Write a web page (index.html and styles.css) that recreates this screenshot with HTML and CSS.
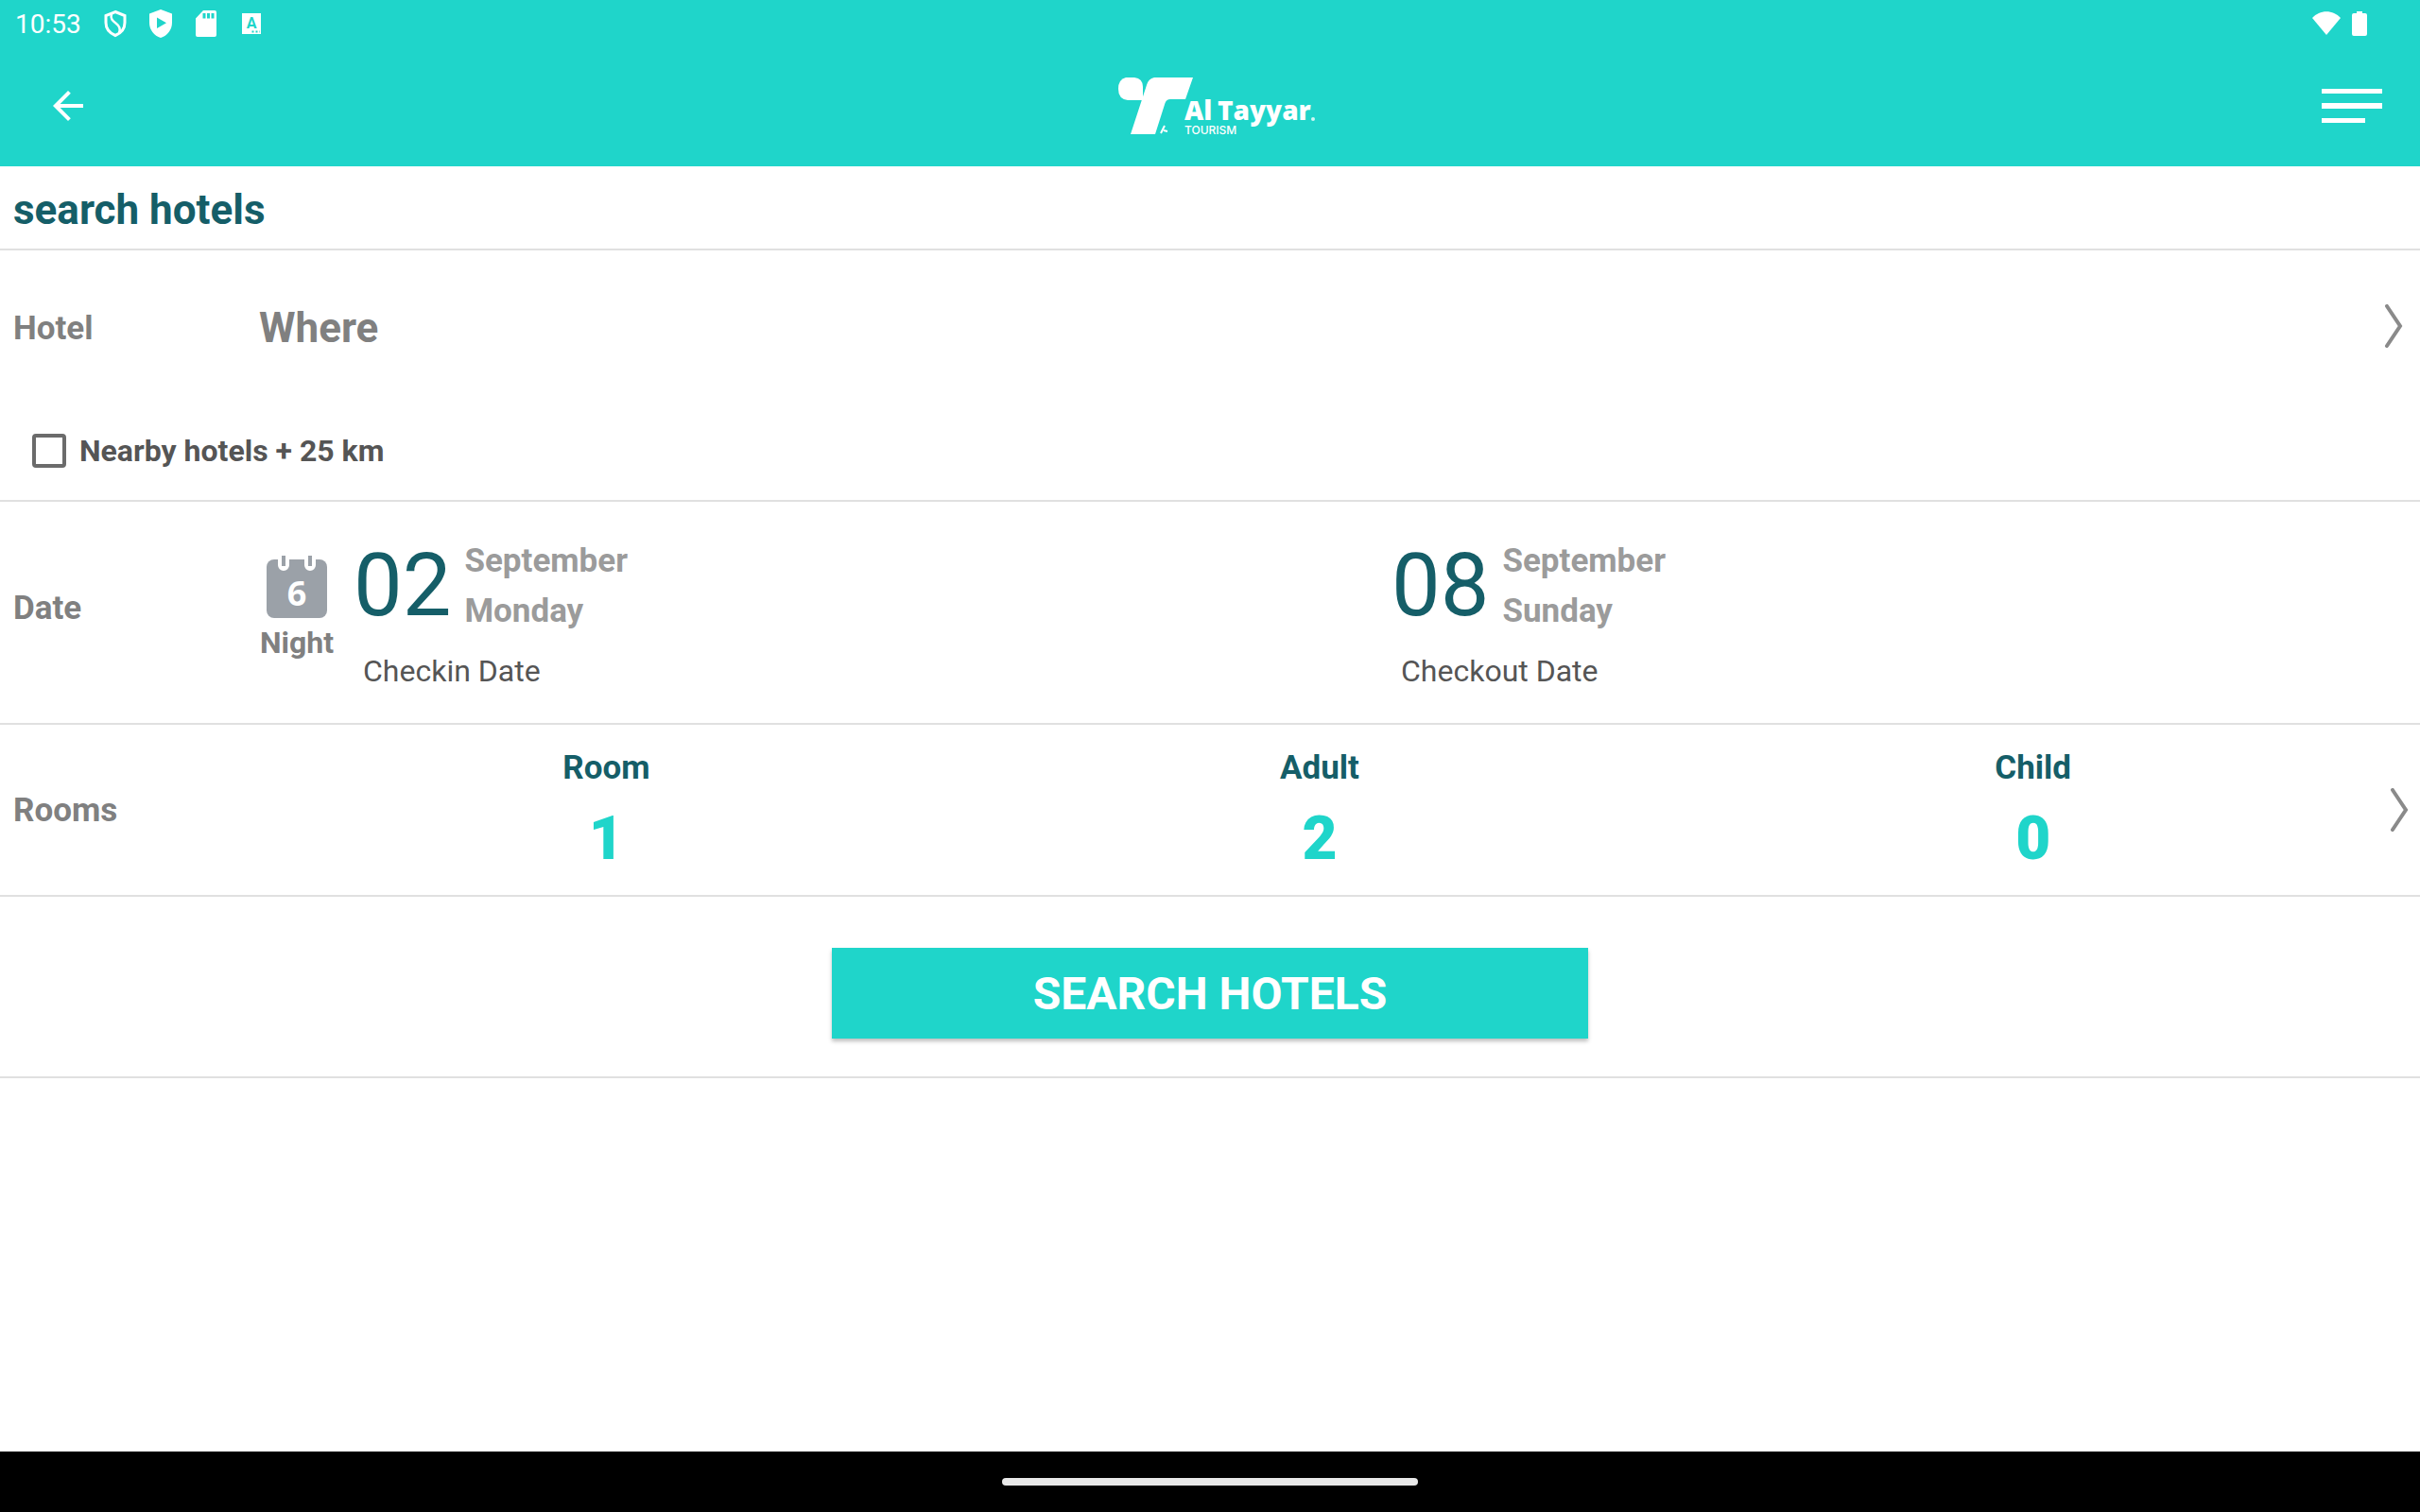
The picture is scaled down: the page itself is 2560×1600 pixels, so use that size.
FILE: index.html
```
<!DOCTYPE html>
<html lang="en">
<head>
  <meta charset="utf-8">
  <meta name="viewport" content="width=device-width, initial-scale=1">
  <title>Al Tayyar - Search Hotels</title>
  <link rel="stylesheet" href="styles.css">
</head>
<body>
  <header class="top">
    <div class="status-bar">
      <span class="clock">10:53</span>
      <div class="status-icons">
        <svg width="26" height="30" viewBox="0 0 26 30" fill="none" stroke="#fff" stroke-width="3">
          <path d="M13 2.5 L23 6.5 V14 C23 20 19 25 13 27.5 C7 25 3 20 3 14 V6.5 Z"/>
          <path d="M9 4.500 C7.500 10 10 12 14 15 C18 18 18.500 21 17 24.500" stroke-width="2.5"/>
        </svg>
        <svg width="26" height="30" viewBox="0 0 26 30">
          <path fill="#fff" fill-rule="evenodd" d="M13 0 L25 4.5 V14 C25 21.5 20 28 13 30 C6 28 1 21.5 1 14 V4.5 Z M9 8.5 V20 L19 14.2 Z"/>
        </svg>
        <svg width="26" height="30" viewBox="0 0 26 30">
          <path fill="#fff" fill-rule="evenodd" d="M10 1 H22 Q24 1 24 3 V27 Q24 29 22 29 H4 Q2 29 2 27 V9.500 Z M9.500 4 V9.500 H12.500 V4 Z M14 4 V9.500 H17 V4 Z M18.500 4 V9.500 H21.500 V4 Z"/>
        </svg>
        <svg width="26" height="30" viewBox="0 0 26 30">
          <rect x="3" y="4" width="20" height="22" fill="#fff"/>
          <text class="badge-letter" x="13" y="20" text-anchor="middle">A</text>
          <path stroke="#1fd5ca" stroke-width="2" stroke-dasharray="2 2" d="M13.500 23.500 H22"/>
        </svg>
      </div>
      <div class="system-icons">
        <svg width="30" height="26" viewBox="0 0 30 26">
          <path fill="#fff" d="M0 7 C8 -2 22 -2 30 7 L15 25 Z"/>
        </svg>
        <svg width="16" height="26" viewBox="0 0 16 26">
          <path fill="#fff" d="M5 0 H11 V2 H14 Q16 2 16 4 V24 Q16 26 14 26 H2 Q0 26 0 24 V4 Q0 2 2 2 H5 Z"/>
        </svg>
      </div>
    </div>
    <div class="app-bar">
      <button type="button" class="icon-button" aria-label="Back">
        <svg width="48" height="48" viewBox="0 0 24 24">
          <path fill="#fff" d="M20 11H7.830l5.590-5.590L12 4l-8 8 8 8 1.410-1.410L7.830 13H20v-2z"/>
        </svg>
      </button>
      <svg class="logo" width="216" height="66" viewBox="-5 0 216 66" role="img" aria-label="Al Tayyar Tourism">
        <path fill="#fff" d="M10 3 H19 Q28 4 28 13 V27 H12 Q2 26 2 15 Q2 5 10 3 Z"/>
        <path fill="#fff" d="M40 3 H81 L73 26 H57 Q53 26 51.500 30 L41 63 H15 L32 11 Q34 4 40 3 Z"/>
        <path fill="none" stroke="#fff" stroke-width="2" d="M51 54 L47 62 M50 59 L54 60"/>
        <text class="logo-name" x="72" y="48">Al</text>
        <text class="logo-name" x="107" y="48">Tayyar</text>
        <circle cx="208" cy="47" r="2" fill="#fff" opacity="0.8"/>
        <text class="logo-sub" x="72" y="63">TOURISM</text>
      </svg>
      <button type="button" class="icon-button" aria-label="Menu">
        <svg width="64" height="36" viewBox="0 0 64 36" fill="#fff">
          <rect y="0" width="64" height="5"/>
          <rect y="15" width="64" height="6"/>
          <rect y="31" width="46" height="5"/>
        </svg>
      </button>
    </div>
  </header>

  <main>
    <h1>search hotels</h1>
    <form>
      <section class="hotel">
        <button type="button" class="row hotel-row">
          <span class="label">Hotel</span>
          <span class="where">Where</span>
          <svg class="chevron" width="20" height="46" viewBox="0 0 20 46">
            <path d="M3 2 L17 23 L3 44"/>
          </svg>
        </button>
        <label class="nearby">
          <input type="checkbox">
          Nearby hotels + 25 km
        </label>
      </section>

      <section class="row dates">
        <span class="label">Date</span>
        <div class="nights">
          <svg width="66" height="68" viewBox="0 0 66 68">
            <rect x="1" y="5" width="64" height="62" rx="8" fill="#9ba1a8"/>
            <path stroke="#fff" stroke-width="12" stroke-linecap="round" d="M19 0 V11 M47 0 V11"/>
            <path stroke="#9ba1a8" stroke-width="4" d="M19 1 V12 M47 1 V12"/>
            <text class="night-count" x="33" y="54" text-anchor="middle">6</text>
          </svg>
          <span>Night</span>
        </div>
        <button type="button" class="date">
          <span class="date-value">
            <span class="day">02</span>
            <span class="month">September<br>Monday</span>
          </span>
          <span class="caption">Checkin Date</span>
        </button>
        <button type="button" class="date">
          <span class="date-value">
            <span class="day">08</span>
            <span class="month">September<br>Sunday</span>
          </span>
          <span class="caption">Checkout Date</span>
        </button>
      </section>

      <section>
        <button type="button" class="row rooms">
          <span class="label">Rooms</span>
          <span class="count">Room <strong>1</strong></span>
          <span class="count">Adult <strong>2</strong></span>
          <span class="count">Child <strong>0</strong></span>
          <svg class="chevron" width="20" height="46" viewBox="0 0 20 46">
            <path d="M3 2 L17 23 L3 44"/>
          </svg>
        </button>
      </section>

      <section class="submit">
        <button type="submit" class="search-button">SEARCH HOTELS</button>
      </section>
    </form>
  </main>

  <footer class="nav-bar">
    <div class="home-handle"></div>
  </footer>
</body>
</html>
```

FILE: styles.css
```
* {
  box-sizing: border-box;
}

body {
  margin: 0;
  min-height: 100vh;
  display: flex;
  flex-direction: column;
  font-family: Roboto, sans-serif;
  background-color: #fff;
  color: #808080;
}

button {
  font: inherit;
  color: inherit;
  background: none;
  border: none;
  padding: 0;
  text-align: left;
  cursor: pointer;
}

svg {
  display: block;
  flex-shrink: 0;
}

/* header */
.top {
  background-color: #1fd5ca;
  color: #fff;
}

.status-bar {
  display: flex;
  align-items: center;
  height: 48px;
  padding: 2px 56px 0 16px;
}

.clock {
  font-size: 28px;
}

.status-icons {
  display: flex;
  gap: 22px;
  margin-left: 23px;
}

.badge-letter {
  font: bold 16px Roboto, sans-serif;
  fill: #1fd5ca;
}

.system-icons {
  display: flex;
  gap: 12px;
  margin-left: auto;
}

.app-bar {
  display: grid;
  grid-template-columns: 1fr auto 1fr;
  align-items: center;
  height: 128px;
  padding: 0 40px 0 48px;
}

.icon-button:last-child {
  justify-self: end;
}

.icon-button:first-child {
  justify-self: start;
}

.logo-name {
  font: 800 28px "Open Sans", sans-serif;
  fill: #fff;
}

.logo-sub {
  font: 500 12px Inter, sans-serif;
  fill: #fff;
}

/* search form */
main {
  flex: 1;
}

h1 {
  margin: 0;
  padding: 20px 14px 15px;
  font-size: 44px;
  line-height: 52px;
  color: #155e68;
  border-bottom: 2px solid #e0e0e0;
}

section {
  border-bottom: 2px solid #e0e0e0;
}

.row {
  display: flex;
  align-items: center;
  width: 100%;
}

.label {
  width: 260px;
  font-size: 35px;
  font-weight: bold;
}

.chevron {
  fill: none;
  stroke: #8a8a8a;
  stroke-width: 4;
  stroke-linecap: round;
}

.hotel {
  padding-bottom: 4px;
}

.hotel-row {
  height: 164px;
  padding: 0 18px 0 14px;
}

.hotel-row .chevron {
  margin-bottom: 4px;
}

.where {
  flex: 1;
  font-size: 44px;
  font-weight: bold;
}

.nearby {
  display: flex;
  align-items: center;
  gap: 14px;
  height: 96px;
  padding-left: 34px;
  font-size: 32px;
  font-weight: bold;
  color: #555;
}

.nearby input {
  appearance: none;
  width: 36px;
  height: 36px;
  margin: 0;
  border: 4px solid #6b6b6b;
  border-radius: 4px;
}

.nearby input:checked {
  background-color: #1fd5ca;
}

.dates {
  height: 236px;
  padding-left: 14px;
}

.dates .label,
.nights {
  margin-bottom: 10px;
}

.nights {
  display: flex;
  flex-direction: column;
  align-items: center;
  gap: 6px;
  width: 80px;
  margin-right: 10px;
  font-size: 32px;
  font-weight: bold;
}

.night-count {
  font: bold 36px "Open Sans", sans-serif;
  fill: #fff;
}

.date {
  flex: 1;
}

.date-value {
  display: flex;
  align-items: center;
  gap: 14px;
  padding-left: 10px;
}

.day {
  font-size: 92px;
  line-height: 106px;
  color: #155e68;
}

.month {
  font-size: 35px;
  font-weight: bold;
  line-height: 53px;
  color: #9b9b9b;
}

.caption {
  display: block;
  padding: 18px 0 0 20px;
  font-size: 32px;
  line-height: 38px;
  color: #555;
}

.rooms {
  height: 180px;
  padding: 0 12px 0 14px;
}

.rooms .label {
  width: 250px;
}

.count {
  flex: 1;
  padding-top: 16px;
  text-align: center;
  font-size: 35px;
  font-weight: bold;
  line-height: 42px;
  color: #155e68;
}

.count strong {
  display: block;
  padding-top: 4px;
  font-size: 64px;
  line-height: 100px;
  color: #1fd5ca;
}

.submit {
  display: flex;
  justify-content: center;
  padding: 54px 0 40px;
}

.search-button {
  width: 800px;
  max-width: 100%;
  height: 96px;
  font-size: 48px;
  font-weight: bold;
  text-align: center;
  color: #fff;
  background-color: #1fd5ca;
  box-shadow: 0 3px 4px rgba(0, 0, 0, 0.25);
}

/* system navigation */
.nav-bar {
  display: flex;
  align-items: center;
  justify-content: center;
  height: 64px;
  background-color: #000;
}

.home-handle {
  width: 440px;
  height: 8px;
  border-radius: 4px;
  background-color: #e8e8e8;
}
```
